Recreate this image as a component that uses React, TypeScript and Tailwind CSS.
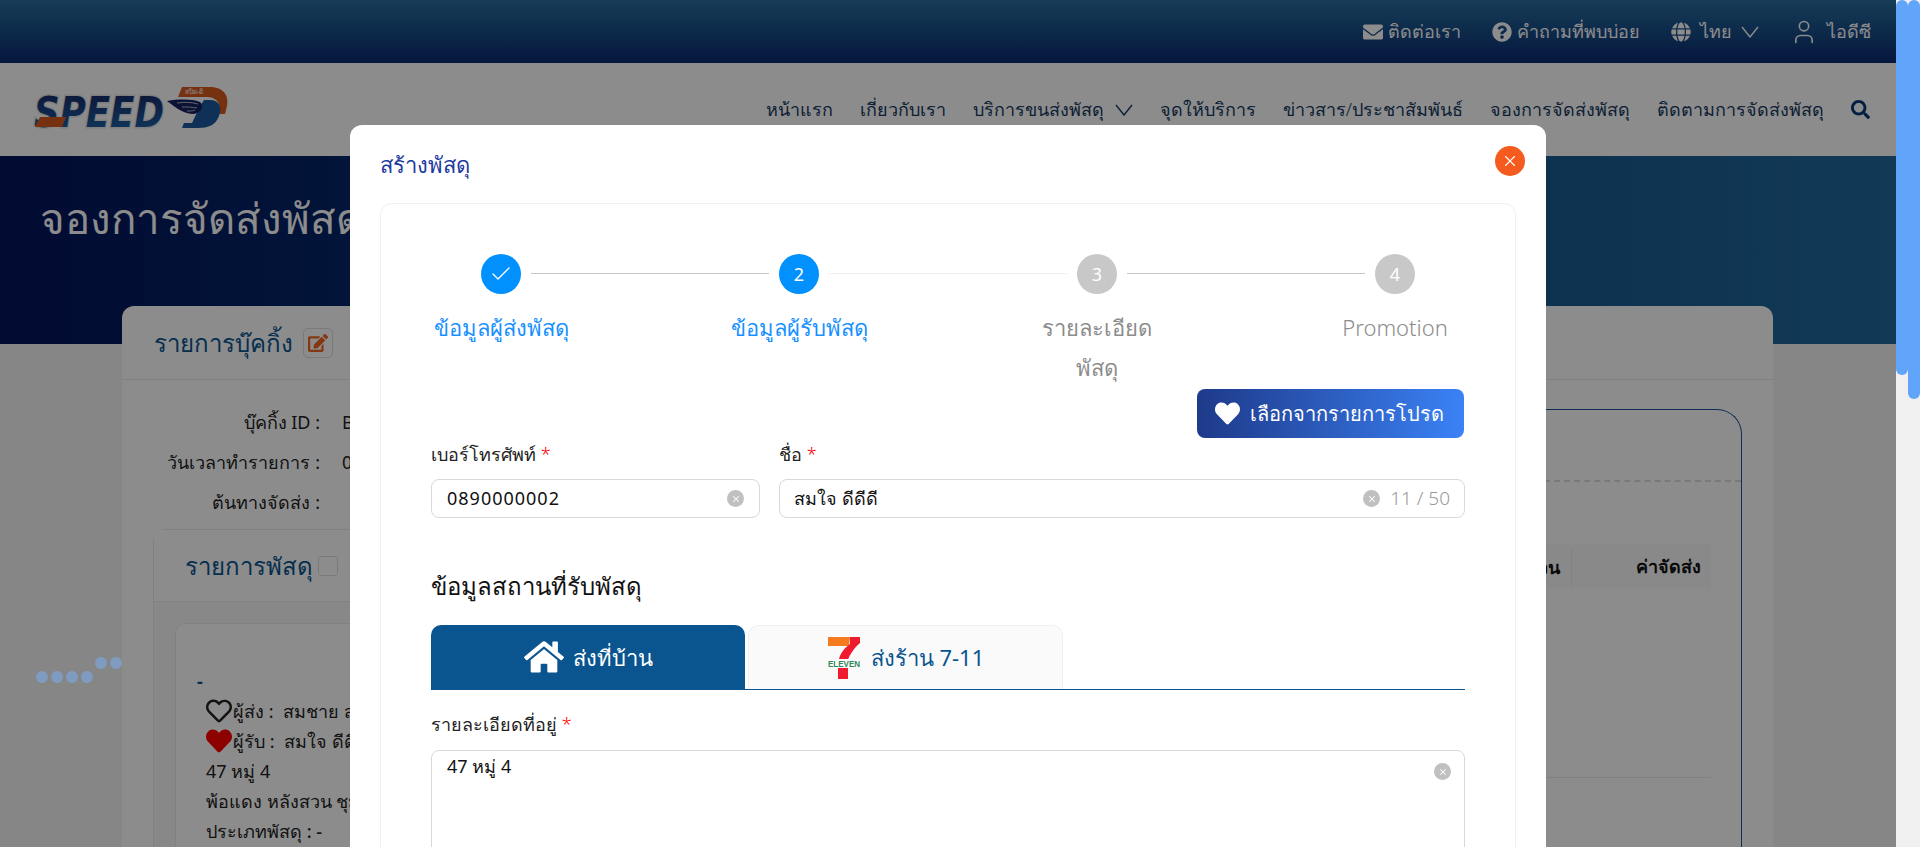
import { Check, User, X } from "lucide-react";
import {
  FaEdit,
  FaEnvelope,
  FaGlobe,
  FaHeart,
  FaHome,
  FaQuestionCircle,
  FaRegHeart,
  FaSearch,
} from "react-icons/fa";

const navItems = [
  { label: "หน้าแรก" },
  { label: "เกี่ยวกับเรา" },
  { label: "บริการขนส่งพัสดุ", caret: true },
  { label: "จุดให้บริการ" },
  { label: "ข่าวสาร/ประชาสัมพันธ์" },
  { label: "จองการจัดส่งพัสดุ" },
  { label: "ติดตามการจัดส่งพัสดุ" },
];

const steps = [
  { label: "ข้อมูลผู้ส่งพัสดุ", state: "done" },
  { label: "ข้อมูลผู้รับพัสดุ", state: "active" },
  { label: "รายละเอียดพัสดุ", state: "todo", num: 3 },
  { label: "Promotion", state: "todo", num: 4 },
];

function Caret() {
  return (
    <svg viewBox="0 0 18 12" className="h-[12px] w-[18px]" fill="none" stroke="currentColor" strokeWidth="1.4">
      <path d="M1 1l8 10 8-10" />
    </svg>
  );
}

function Logo() {
  return (
    <svg viewBox="0 -2 200 52" className="h-[52px] w-[200px]">
      <defs>
        <linearGradient id="speedFill" x1="0" y1="0" x2="0" y2="1">
          <stop offset="0" stopColor="#14225f" />
          <stop offset="1" stopColor="#1f6bb0" />
        </linearGradient>
      </defs>
      <text
        x="2"
        y="41"
        fontFamily="DejaVu Sans"
        fontSize="43"
        fontWeight="700"
        fontStyle="italic"
        fill="url(#speedFill)"
        stroke="#e8e8e8"
        strokeWidth="3"
        paintOrder="stroke"
        textLength="130"
        lengthAdjust="spacingAndGlyphs"
      >
        SPEED
      </text>
      <path d="M8 31h26l-4 10H3z" fill="#d65a1e" />
      <path d="M150 1h28c14 0 19 9 17 19l-2 8h-6c2-10-1-16-11-17h-30z" fill="#d65a1e" />
      <path d="M172 14h6c10 0 12 8 9 16-3 9-11 12-21 12h-16l2-5h8l8-17z" fill="#1c5a9e" />
      <path d="M135 15c13-2 25-2 33 1 4 4 2 10-6 12-10 0-18-6-27-13z" fill="#14225f" />
      <path d="M145 17c7-1 14-1 21 1M150 21c5 0 10 0 15 1M155 25c3 0 6 0 8-1" stroke="#d5dde8" strokeWidth="0.8" fill="none" />
      <text x="153" y="8" fontFamily="Noto Sans" fontSize="6.5" fill="#ffffff">สปีด-ดี</text>
    </svg>
  );
}

function ClearDot({ className = "" }: { className?: string }) {
  return (
    <span className={`flex h-[17px] w-[17px] shrink-0 items-center justify-center rounded-full bg-[#c0c0c0] text-white ${className}`}>
      <X size={10} strokeWidth={2.5} />
    </span>
  );
}

function Required() {
  return <span className="text-[#ff0000]"> *</span>;
}

function SevenEleven() {
  return (
    <svg viewBox="0 0 34 44" className="h-[44px] w-[34px]">
      <path d="M1 1h22l-1 9H1z" fill="#f47b20" />
      <path d="M23 1h10v6C26 13 21 21 20 28h-9c1-9 5-15 12-20z" fill="#ee1c2e" />
      <rect x="1" y="23" width="32" height="9" fill="#fafafa" />
      <text x="17" y="31" textAnchor="middle" fontFamily="Liberation Sans" fontSize="9" fontWeight="700" fill="#2f8a5b" textLength="32" lengthAdjust="spacingAndGlyphs">ELEVEN</text>
      <rect x="11" y="32" width="10" height="11" fill="#ee1c2e" />
    </svg>
  );
}

function BackgroundPage() {
  return (
    <>
      <header className="flex h-[63px] items-center justify-end gap-[31px] bg-gradient-to-b from-[#2a6f9f] to-[#0c2a70] pr-[25px] text-[18px] font-light text-white">
        <span className="flex items-center gap-[5px]"><FaEnvelope size={20} />ติดต่อเรา</span>
        <span className="flex items-center gap-[5px]"><FaQuestionCircle size={20} />คำถามที่พบบ่อย</span>
        <span className="flex items-center gap-[9px]"><FaGlobe size={20} />ไทย<Caret /></span>
        <span className="flex items-center gap-[9px]"><User size={28} strokeWidth={1.4} />ไอดีซี</span>
      </header>

      <nav className="flex h-[93px] items-center justify-between bg-white pl-[32px] pr-[26px]">
        <Logo />
        <div className="flex items-center gap-[27px] text-[18px] font-light text-[#163a5f]">
          {navItems.map((n) => (
            <span key={n.label} className="flex items-center gap-[11px]">
              {n.label}
              {n.caret && <Caret />}
            </span>
          ))}
          <FaSearch size={19} className="text-[#0a3a78]" />
        </div>
      </nav>

      <section className="h-[188px] bg-gradient-to-r from-[#04145c] to-[#216a9e] pl-[40px] pt-[30px] text-[42px] leading-[64px] text-white">
        จองการจัดส่งพัสดุ
      </section>

      <div className="flow-root h-[503px] bg-[#f5f5f5] pl-[122px]">
        <div className="-mt-[38px] h-[560px] w-[1651px] rounded-t-[12px] bg-white">
          <div className="flex h-[74px] items-center gap-[10px] border-b border-[#ececec] pl-[32px] text-[24px] text-[#0a5590]">
            รายการบุ๊คกิ้ง
            <span className="flex h-[30px] w-[30px] items-center justify-center rounded-[5px] border border-[#dddddd] text-[#f26522]">
              <FaEdit size={20} />
            </span>
          </div>
          <div className="flex justify-between px-[31px] pt-[22px]">
            <div className="w-[800px]">
              <div className="grid grid-cols-[167px_1fr] gap-x-[22px] text-[18px] leading-[40px] text-[#222222]">
                <span className="text-right">บุ๊คกิ้ง ID :</span><span>B</span>
                <span className="text-right">วันเวลาทำรายการ :</span><span>0</span>
                <span className="text-right">ต้นทางจัดส่ง :</span><span></span>
              </div>
              <div className="mt-[7px] rounded-t-[12px] border border-[#ececec]">
                <div className="flex h-[72px] items-center gap-[5px] border-b border-[#ececec] bg-white pl-[31px] text-[24px] text-[#0a5590]">
                  รายการพัสดุ
                  <span className="h-[20px] w-[20px] rounded-[4px] border border-[#dddddd]" />
                </div>
                <div className="bg-[#f7f7f7] pl-[21px] pt-[21px]">
                  <div className="h-[300px] rounded-t-[10px] border border-[#ececec] bg-white pl-[21px] pt-[42px] text-[18px] leading-[30px] text-[#222222]">
                    <div className="font-bold text-[#0a5590]">-</div>
                    <div className="pl-[9px]">
                      <div className="flex items-center gap-[1px]"><FaRegHeart size={26} />ผู้ส่ง : &nbsp;สมชาย สมชาย</div>
                      <div className="flex items-center gap-[1px]"><FaHeart size={26} className="text-[#ff0000]" />ผู้รับ : &nbsp;สมใจ ดีดีดี</div>
                      <div>47 หมู่ 4</div>
                      <div>พ้อแดง หลังสวน ชุมพร</div>
                      <div className="font-medium">ประเภทพัสดุ : -</div>
                    </div>
                  </div>
                </div>
              </div>
            </div>

            <div className="mt-[7px] h-[500px] w-[600px] rounded-tr-[25px] border-r border-t border-[#1d4fa0]">
              <div className="h-[72px] border-b-2 border-dashed border-[#dddddd]" />
              <div className="ml-[20px] mr-[30px] mt-[62px]">
                <div className="flex h-[45px] items-center justify-end bg-[#f9f9f9] pr-[10px] text-[18px] font-semibold text-[#111111]">
                  <span className="border-r border-[#ececec] pr-[11px] leading-[38px]">จำนวน</span>
                  <span className="w-[129px] text-right">ค่าจัดส่ง</span>
                </div>
                <div className="h-[189px] border-b border-[#ececec]" />
              </div>
            </div>
          </div>
        </div>
      </div>
    </>
  );
}

function Stepper() {
  return (
    <div className="flex">
      {steps.map((s, i) => {
        const on = s.state !== "todo";
        return (
          <div key={s.label} className="flex w-[298px] shrink-0 flex-col items-center first:ml-[-79px]">
            <div className="relative flex h-[40px] w-full items-center justify-center">
              <span className={`z-10 flex h-[40px] w-[40px] items-center justify-center rounded-full text-[18px] text-white ${on ? "bg-[#0091ff]" : "bg-[#c8c8c8]"}`}>
                {s.state === "done" ? <Check size={24} strokeWidth={1.4} /> : s.state === "active" ? 2 : s.num}
              </span>
              {i < steps.length - 1 && (
                <span className={`absolute left-[179px] top-[19px] h-[1px] w-[238px] ${i === 1 ? "bg-[#f0f0f0]" : "bg-[#c8c8c8]"}`} />
              )}
            </div>
            <div className={`mt-[13px] w-[140px] text-center text-[22px] font-light leading-[40px] ${on ? "text-[#1890ff]" : "text-[#8c8c8c]"}`}>
              {s.label}
            </div>
          </div>
        );
      })}
    </div>
  );
}

function CreateParcelModal() {
  return (
    <div className="absolute left-[350px] top-[125px] h-[800px] w-[1196px] rounded-[12px] bg-white px-[30px]">
      <div className="flex h-[78px] items-center justify-between">
        <span className="text-[22px] font-light text-[#1e3a9e]">สร้างพัสดุ</span>
        <button className="mr-[-9px] mt-[-6px] flex h-[30px] w-[30px] items-center justify-center rounded-full bg-[#f55a1e] text-white">
          <X size={18} strokeWidth={1.5} />
        </button>
      </div>
      <div className="h-[700px] rounded-[12px] border border-[#f0f0f0] px-[50px] pt-[50px]">
        <Stepper />
        <div className="mt-[2px] flex justify-end pr-[1px]">
          <button className="flex h-[49px] w-[267px] items-center gap-[10px] rounded-[8px] bg-gradient-to-r from-[#1e3a8a] to-[#3b82f6] pl-[18px] text-[20px] font-light text-white">
            <FaHeart size={25} />เลือกจากรายการโปรด
          </button>
        </div>
        <div className="flex gap-[19px] text-[18px] font-light text-[#222222]">
          <div className="w-[329px]">
            <div className="mb-[9px] leading-[32px]">เบอร์โทรศัพท์<Required /></div>
            <div className="flex h-[39px] items-center justify-between rounded-[8px] border border-[#d9d9d9] px-[15px] font-normal tracking-[1px] text-[#111111]">
              0890000002
              <ClearDot />
            </div>
          </div>
          <div className="flex-1">
            <div className="mb-[9px] leading-[32px]">ชื่อ<Required /></div>
            <div className="flex h-[39px] items-center rounded-[8px] border border-[#d9d9d9] px-[14px] text-[#111111]">
              <span className="flex-1">สมใจ ดีดีดี</span>
              <ClearDot />
              <span className="ml-[10px] text-[19px] text-[#999999]">11 / 50</span>
            </div>
          </div>
        </div>
        <h3 className="mt-[48px] text-[24px] font-normal leading-[40px] text-[#111111]">ข้อมูลสถานที่รับพัสดุ</h3>
        <div className="mt-[19px] flex gap-[3px] border-b border-[#0a5590]">
          <div className="flex h-[64px] w-[314px] items-center justify-center gap-[9px] rounded-t-[10px] bg-[#0a5590] text-[22px] text-white">
            <FaHome size={40} />ส่งที่บ้าน
          </div>
          <div className="flex h-[64px] w-[315px] items-center justify-center gap-[10px] rounded-t-[10px] border border-b-0 border-[#f0f0f0] bg-[#fafafa] text-[22px] text-[#0a5590]">
            <SevenEleven />ส่งร้าน 7-11
          </div>
        </div>
        <div className="mt-[18px] text-[18px] font-light leading-[32px] text-[#222222]">รายละเอียดที่อยู่<Required /></div>
        <div className="relative mt-[10px] h-[150px] rounded-[8px] border border-[#d9d9d9] px-[15px] pt-[2px] text-[18px] text-[#111111]">
          47 หมู่ 4
          <ClearDot className="absolute right-[13px] top-[12px]" />
        </div>
      </div>
    </div>
  );
}

export default function App() {
  return (
    <div className="flex h-[847px] w-full overflow-hidden bg-[#f0f0f0] font-['Noto_Sans','Open_Sans',sans-serif]">
      <main className="relative h-[847px] w-[1896px] overflow-hidden">
        <BackgroundPage />
        <div className="absolute inset-0 bg-black/45" />
        <div className="absolute left-[36px] top-[671px] flex gap-[3px]">
          {[0, 1, 2, 3].map((d) => (
            <span key={d} className="h-[12px] w-[12px] rounded-full bg-[#7f9cc0]" />
          ))}
        </div>
        <div className="absolute left-[95px] top-[657px] flex gap-[3px]">
          {[0, 1].map((d) => (
            <span key={d} className="h-[12px] w-[12px] rounded-full bg-[#7f9cc0]" />
          ))}
        </div>
        <CreateParcelModal />
      </main>
      <div className="flex w-[24px]">
        <div className="h-[375px] w-[12px] rounded-[6px] bg-[#60a5fa]" />
        <div className="h-[399px] w-[12px] rounded-[6px] bg-[#60a5fa]" />
      </div>
    </div>
  );
}
